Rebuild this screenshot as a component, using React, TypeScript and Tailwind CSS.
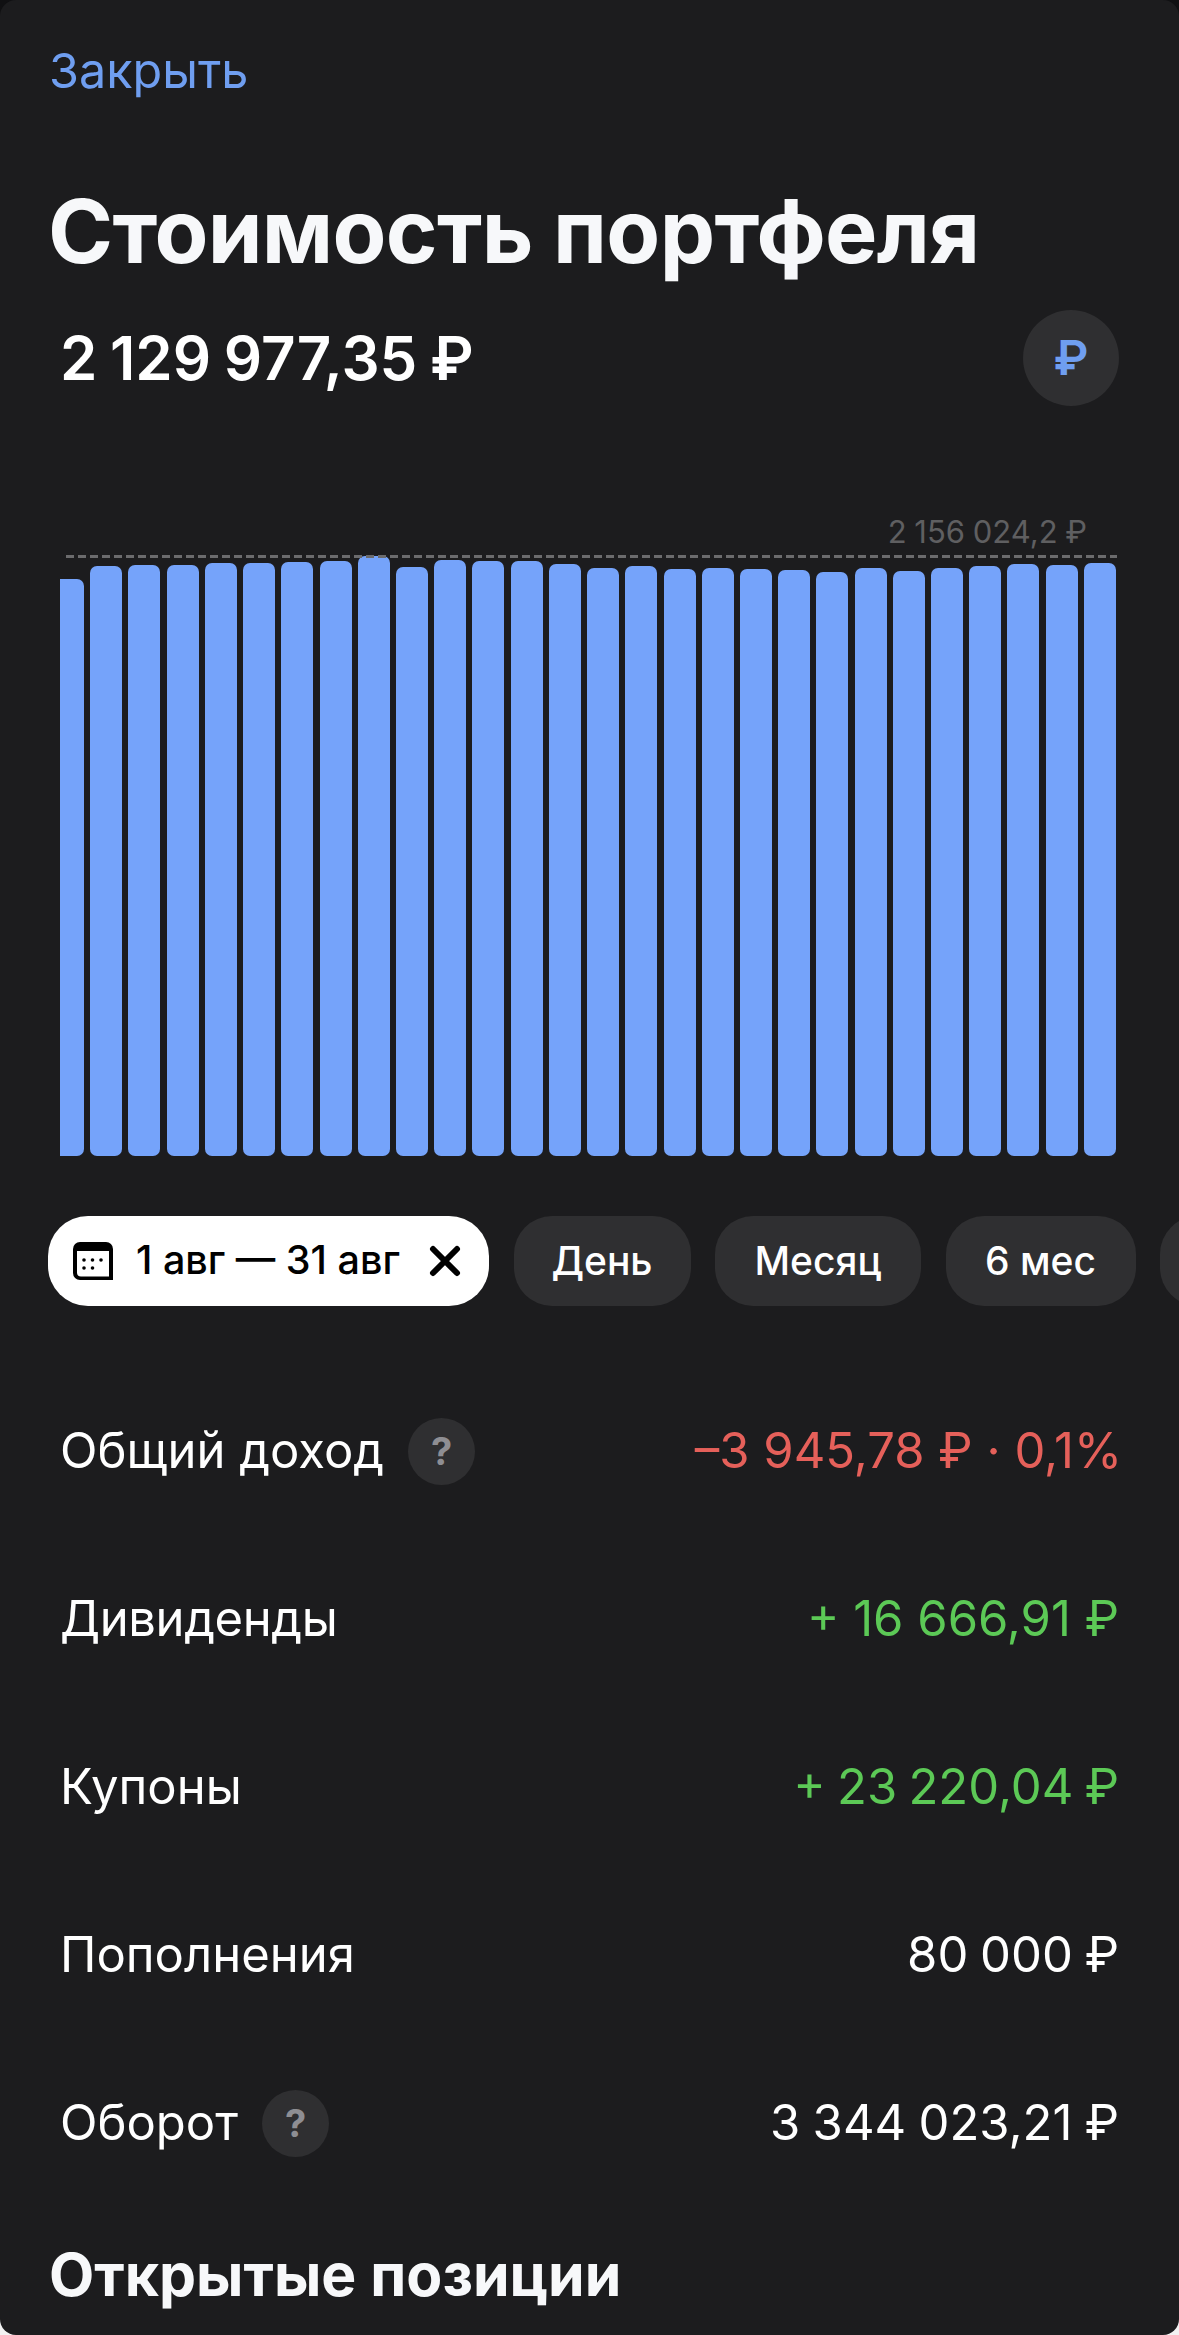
const barTops = [
  579, 566, 565, 565, 563, 563, 562, 561, 556, 567, 560, 561, 561, 564, 568, 566, 569, 568, 569, 570, 572, 568, 571, 568,
  566, 564, 565, 563,
];

const rows = [
  { label: 'Общий доход', value: '–3 945,78 ₽ · 0,1%', color: 'text-[#e5605a] mr-[-3px]', help: true },
  { label: 'Дивиденды', labelClass: 'tracking-[-0.4px]', value: '+ 16 666,91 ₽', color: 'text-[#5cc956]' },
  { label: 'Купоны', value: '+ 23 220,04 ₽', color: 'text-[#5cc956] [word-spacing:-2.5px]' },
  { label: 'Пополнения', value: '80 000 ₽', color: 'text-white [word-spacing:-2px]' },
  { label: 'Оборот', value: '3 344 023,21 ₽', color: 'text-white [word-spacing:-1.5px]', help: true },
];

function CalendarIcon() {
  return (
    <svg width="40" height="38" viewBox="0 0 40 38" className="shrink-0">
      <path d="M7 0H33A7 7 0 0 1 40 7V38H7A7 7 0 0 1 0 31V7A7 7 0 0 1 7 0Z" fill="#000" />
      <path d="M4 9H36V34.5H8A4 4 0 0 1 4 30.5Z" fill="#fff" />
      <circle cx="11" cy="18" r="1.8" fill="#000" />
      <circle cx="19.5" cy="18" r="1.8" fill="#000" />
      <circle cx="28" cy="18" r="1.8" fill="#000" />
      <circle cx="11" cy="26" r="1.8" fill="#000" />
      <circle cx="19.5" cy="26" r="1.8" fill="#000" />
    </svg>
  );
}

function CloseIcon() {
  return (
    <svg width="32" height="32" viewBox="0 0 32 32" className="shrink-0">
      <path d="M4 4L28 28M28 4L4 28" stroke="#000" strokeWidth="6" strokeLinecap="round" />
    </svg>
  );
}

function Pill({ label, width }: { label: string; width: string }) {
  return (
    <div
      className={`${width} h-[90px] shrink-0 rounded-[38px] bg-[#2f2f31] flex items-center justify-center text-[39px] font-medium text-white`}
    >
      {label}
    </div>
  );
}

function HelpBadge() {
  return (
    <div className="w-[67px] h-[67px] rounded-full bg-[#2f2f31] flex items-center justify-center text-[38px] font-bold text-[#8e8e93]">
      ?
    </div>
  );
}

export default function App() {
  return (
    <div className="w-[1179px] h-[2335px] overflow-hidden bg-[linear-gradient(#101012_50%,#f2f2f2_50%)]">
      <div className="h-full rounded-[16px] overflow-hidden bg-[#1c1c1e] font-['Inter',sans-serif] text-white">
        <div className="h-[142px] pl-[49px] flex items-center text-[48.5px] text-[#6f9ef0]">Закрыть</div>

        <div className="mt-[10px] h-[158px] pl-[48px] flex items-center text-[88px] font-bold tracking-[-0.7px] text-[#f7f8fa]">
          Стоимость портфеля
        </div>

        <div className="h-[96px] pl-[60px] pr-[60px] flex items-center justify-between">
          <div className="text-[60px] font-semibold [word-spacing:-2.5px]">2 129 977,35 ₽</div>
          <div className="w-[96px] h-[96px] rounded-full bg-[#2f2f31] flex items-center justify-center text-[48px] font-semibold text-[#6f9ef0]">
            ₽
          </div>
        </div>

        <div className="mt-[106px] h-[40px] pr-[92px] flex items-center justify-end text-[31px] text-[#5f5f61] [word-spacing:-1px]">
          2 156 024,2 ₽
        </div>

        <div className="relative mt-[4px] h-[600px] pl-[60px] flex items-end gap-[6.23px]">
          {barTops.map((top, i) => (
            <div
              key={i}
              className={i === 0 ? 'w-[24px] shrink-0 rounded-r-[7px] bg-[#75a3fa]' : 'w-[32px] shrink-0 rounded-[7px] bg-[#75a3fa]'}
              style={{ height: 1156 - top }}
            />
          ))}
          <div className="absolute left-[66px] right-[62px] top-[-1px] h-[3px] bg-[repeating-linear-gradient(90deg,#6b6b6d_0,#6b6b6d_8px,transparent_8px,transparent_12px)]" />
        </div>

        <div className="mt-[60px] pl-[48px] flex gap-[24.5px]">
          <div className="w-[441px] h-[90px] shrink-0 rounded-[40px] bg-white flex items-center pl-[25px] text-[39.5px] font-medium text-black">
            <CalendarIcon />
            <span className="ml-[23px] w-[293px] whitespace-nowrap">1 авг — 31 авг</span>
            <CloseIcon />
          </div>
          <Pill label="День" width="w-[177px]" />
          <Pill label="Месяц" width="w-[206px]" />
          <Pill label="6 мес" width="w-[190px]" />
          <div className="w-[150px] h-[90px] shrink-0 rounded-[38px] bg-[#2f2f31]" />
        </div>

        <div className="mt-[61px] pl-[60px] pr-[60px]">
          {rows.map((row) => (
            <div key={row.label} className="h-[168px] flex items-center justify-between text-[49px]">
              <div className="flex items-center gap-[24px]">
                <span className={row.labelClass}>{row.label}</span>
                {row.help && <HelpBadge />}
              </div>
              <span className={row.color}>{row.value}</span>
            </div>
          ))}
        </div>

        <div className="h-[136px] pl-[49px] flex items-center text-[58.8px] font-bold text-[#f7f8fa]">Открытые позиции</div>
      </div>
    </div>
  );
}
